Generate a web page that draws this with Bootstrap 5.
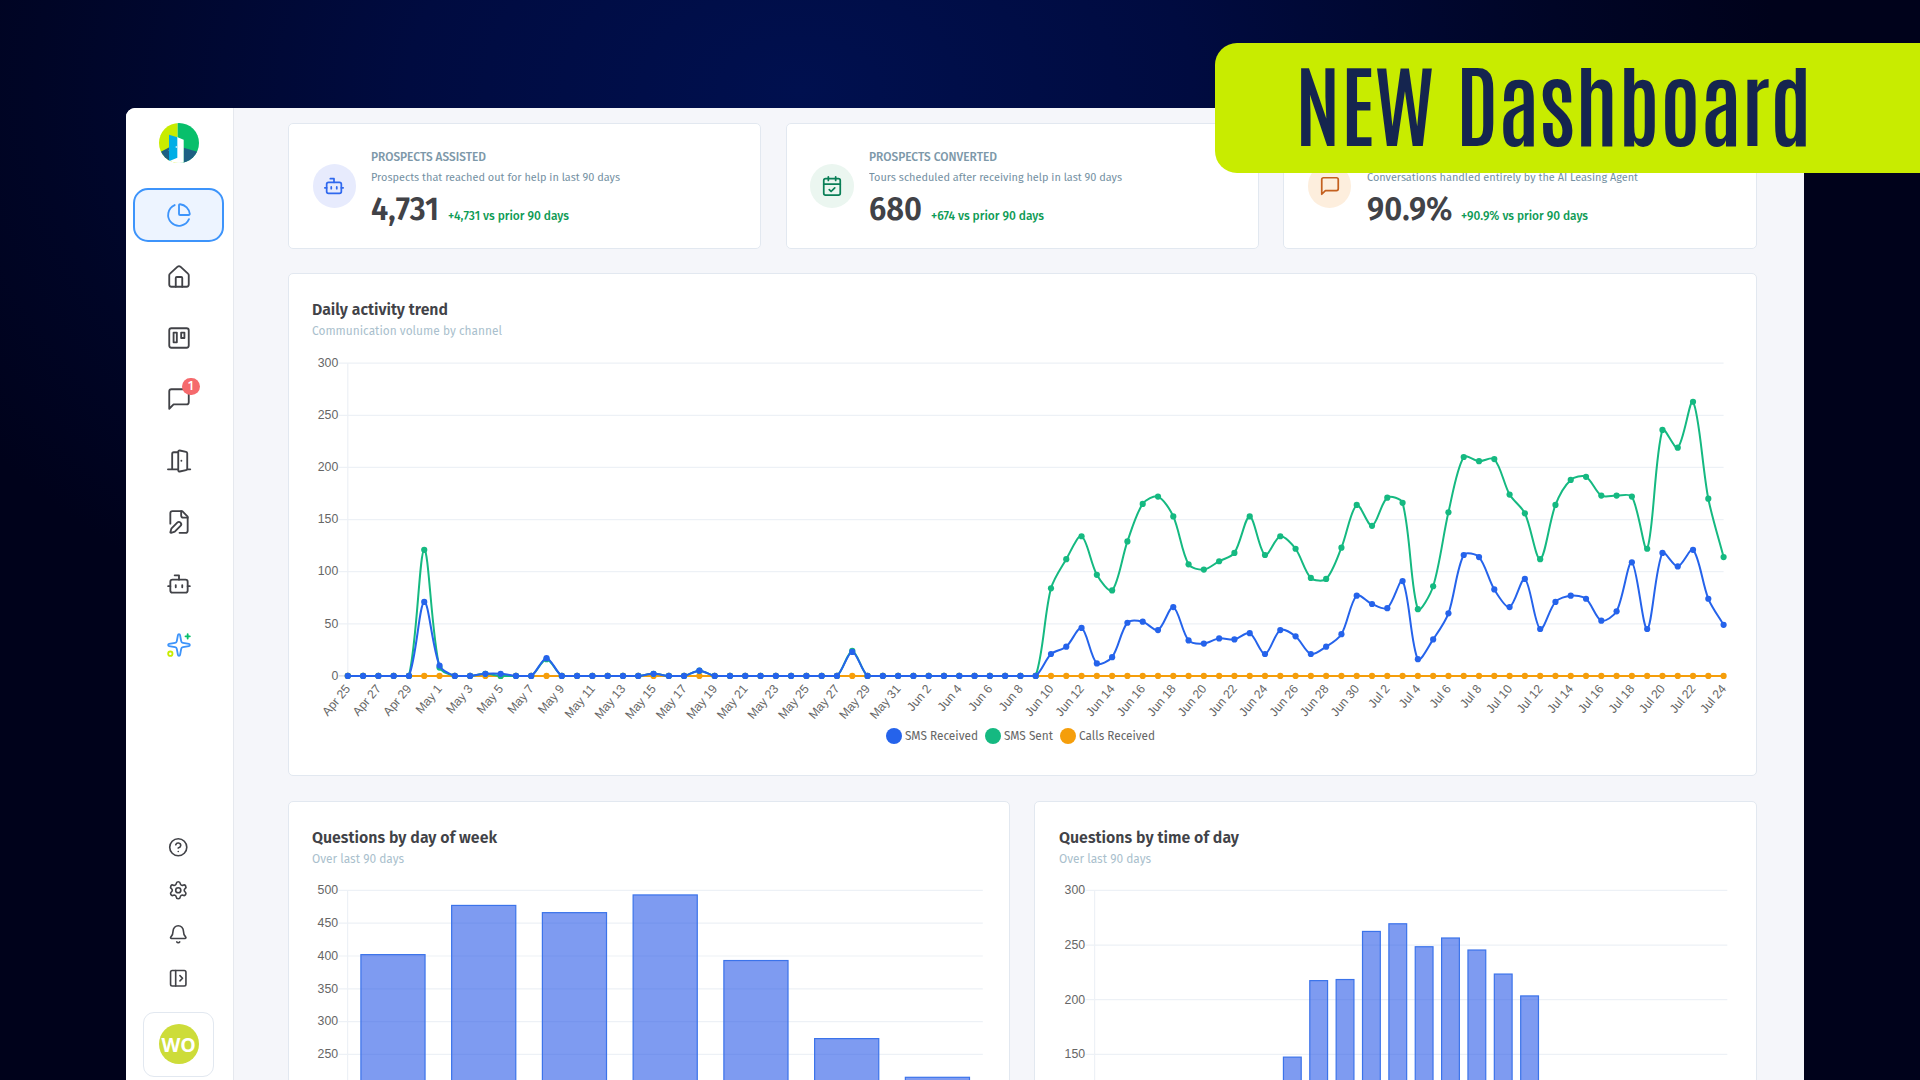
<!DOCTYPE html>
<html lang="en">
<head>
<meta charset="utf-8">
<title>Dashboard</title>
<link href="https://cdn.jsdelivr.net/npm/bootstrap@5.3.0/dist/css/bootstrap.min.css" rel="stylesheet">
<style>
  body { width: 1920px; height: 1080px; overflow: hidden; font-family: "Fira Sans", "Noto Sans", sans-serif; color: #414247;
    background: radial-gradient(ellipse 980px 640px at 800px 90px, #00104f 0%, #000b40 40%, #000526 78%, #00021b 100%); }
  .stage { padding: 108px 116px 0 126px; height: 1080px; }
  .app-panel { height: 972px; border-radius: 9px 9px 0 0; background: #f5f6fa; overflow: hidden; }
  .rail { width: 108px; background: #fff; border-right: 1px solid #e5e8ee; padding: 14.6px 2px 3.4px 0; flex: none; }
  .rail svg, .bubble svg { fill: none; stroke: currentColor; stroke-width: 1.7; stroke-linecap: round; stroke-linejoin: round; display: block; }
  .rail .brand { stroke: none; width: 40px; height: 40px; margin-bottom: 25.8px; }
  .rail-item { width: 90.5px; height: 53.3px; margin-bottom: 8.2px; border-radius: 15px; }
  .rail-item svg { width: 26px; height: 26px; }
  .rail-item.on { border: 2px solid #3d94fb; background: #edf4ff; color: #3d94fb; }
  .mini { height: 43.6px; }
  .mini svg { width: 20.5px; height: 20.5px; stroke-width: 1.9; }
  .count { left: 48.5px; top: 5.5px; width: 18px; height: 17px; background: #f56a6d; color: #fff; font-size: 12px; line-height: 17px; font-weight: 500; }
  .avatar-box { width: 71px; height: 64.5px; border: 1px solid #e2e8f0; border-radius: 11px; margin-top: 12.5px; }
  .avatar { width: 40px; height: 40px; background: #cddc39; color: #fff; font: 700 19.5px "Open Sans", sans-serif; letter-spacing: -.3px; }
  .main-area { padding: 15.2px 47.6px 0 54px; }
  .stack { gap: 24.3px; }
  .panel-card { background: #fff; border: 1px solid #e2e8f0; border-radius: 5px; flex: 1 1 0; min-width: 0; }
  .stat { height: 126px; padding: 23.6px 23.5px 0; gap: 15.2px; }
  .bubble { width: 43.6px; height: 43.6px; margin-top: 16.6px; flex: none; }
  .bubble svg { width: 22px; height: 22px; stroke-width: 1.9; }
  .b-blue { background: #e7ebfd; color: #2f68ee; }
  .b-green { background: #ebf6f0; color: #0a7f57; }
  .b-orange { background: #fdeedd; color: #c4601f; }
  .fit { display: inline-block; white-space: nowrap; transform-origin: 0 50%; }
  .s-head { font-size: 12.2px; line-height: 16px; height: 16px; font-weight: 500; color: #7d98a9; padding-top: 1px; }
  .s-sub { font-size: 11.4px; line-height: 16px; height: 16px; margin-top: 5px; color: #7490a2; }
  .s-num { line-height: 36px; height: 36px; margin-top: 6.4px; }
  .s-num .fig { font-size: 32px; font-weight: 600; }
  .s-num .delta { font-size: 12.2px; font-weight: 500; color: #0f9b56; margin-left: 9px; }
  .chart-card { padding: 24.8px 23.1px 0; }
  .c-title { font-size: 17.1px; font-weight: 600; line-height: 22px; height: 22px; }
  .c-sub { font-size: 12.2px; line-height: 18px; height: 18px; margin-top: 1px; color: #aabfcd; }
  .plot { display: block; margin-top: 10.2px; overflow: visible; }
  .plot text { font-family: "Liberation Sans", sans-serif; font-size: 12.3px; fill: #666; }
  .trend { height: 503px; flex: none; }
  .key { font-size: 12.2px; line-height: 16px; color: #666; gap: 7px; padding-right: 4.5px; margin-top: -22.5px; }
  .dot { width: 16px; height: 16px; margin-right: 3px; }
  .banner { right: 0; top: 43px; width: 705.3px; height: 130px; background: #c8ec00; border-radius: 22px 0 0 22px; padding-left: 80.5px;
    font: 600 90px/116px Antonio, Inter, sans-serif; color: #15254f; }
</style>
<script src="https://cdn.jsdelivr.net/npm/bootstrap@5.3.0/dist/js/bootstrap.bundle.min.js"></script>
</head>
<body>
<div class="stage">
  <div class="app-panel d-flex">
    <nav class="rail d-flex flex-column align-items-center">
      <svg class="brand" viewBox="147 68 120 120">
        <clipPath id="disc"><circle cx="207" cy="128" r="60"/></clipPath>
        <g clip-path="url(#disc)">
          <path fill="#c8ec00" d="M147 68h56v120h-56z"/><path fill="#08bf6b" d="M203 68h64v120h-64z"/>
          <path fill="#1e6083" d="M147 157l31-16v50h-31zM221 142l46 14v34h-46z"/>
          <path fill="#fff" d="M177 150l24-40 20 8v72h-44z"/>
          <path fill="#00aee6" d="M177 103l25 8v61l-25 11z"/><circle fill="#fff" cx="199" cy="140" r="2.5"/>
        </g>
      </svg>
      <div class="rail-item on d-flex align-items-center justify-content-center"><svg viewBox="0 0 24 24"><path d="M21 12c.552 0 1.005-.449.95-.998a10 10 0 0 0-8.953-8.951c-.55-.055-.998.398-.998.95v8a1 1 0 0 0 1 1z"/><path d="M21.21 15.89A10 10 0 1 1 8 2.83"/></svg></div>
      <div class="rail-item d-flex align-items-center justify-content-center"><svg viewBox="0 0 24 24"><path d="M15 21v-8a1 1 0 0 0-1-1h-4a1 1 0 0 0-1 1v8"/><path d="M3 10.4a2 2 0 0 1 .709-1.528l7-6.399a2 2 0 0 1 2.582 0l7 6.399A2 2 0 0 1 21 10.4V19a2 2 0 0 1-2 2H5a2 2 0 0 1-2-2z"/></svg></div>
      <div class="rail-item d-flex align-items-center justify-content-center"><svg viewBox="0 0 24 24"><rect x="3" y="3" width="18" height="18" rx="2"/><path d="M7 7h3v9H7zM14 7h3v5h-3z"/></svg></div>
      <div class="rail-item d-flex align-items-center justify-content-center position-relative"><svg viewBox="0 0 24 24"><path d="M21 15a2 2 0 0 1-2 2H7l-4 4V5a2 2 0 0 1 2-2h14a2 2 0 0 1 2 2z"/></svg><span class="count position-absolute rounded-pill text-center">1</span></div>
      <div class="rail-item d-flex align-items-center justify-content-center"><svg viewBox="0 0 24 24"><path d="M1.8 19.7h9.4M19.8 19.7h2.6M5.7 19.5V5.4A1.5 1.5 0 0 1 7.2 3.9h4"/><path d="M11.3 3.5a1.2 1.2 0 0 1 1.4-1.2l5.8 1.2a1.4 1.4 0 0 1 1.1 1.3v14.4a1.4 1.4 0 0 1-1.1 1.3l-5.8 1.2a1.2 1.2 0 0 1-1.4-1.2zM14.2 11.8h.01"/></svg></div>
      <div class="rail-item d-flex align-items-center justify-content-center"><svg viewBox="0 0 24 24"><path d="M12.5 22H18a2 2 0 0 0 2-2V7l-5-5H6a2 2 0 0 0-2 2v9.5"/><path d="M14 2v4a2 2 0 0 0 2 2h4"/><path d="M13.378 15.626a1 1 0 1 0-3.004-3.004l-5.01 5.012a2 2 0 0 0-.506.854l-.837 2.87a.5.5 0 0 0 .62.62l2.87-.837a2 2 0 0 0 .854-.506z"/></svg></div>
      <div class="rail-item d-flex align-items-center justify-content-center"><svg viewBox="0 0 24 24"><path d="M12 8V4H8"/><rect x="4" y="8" width="16" height="12" rx="2"/><path d="M2 14h2M20 14h2M15 13v2M9 13v2"/></svg></div>
      <div class="rail-item d-flex align-items-center justify-content-center"><svg viewBox="0 0 24 24"><path stroke="#3d94fb" d="M11.017 2.814a1 1 0 0 1 1.966 0l1.051 5.558a2 2 0 0 0 1.594 1.594l5.558 1.051a1 1 0 0 1 0 1.966l-5.558 1.051a2 2 0 0 0-1.594 1.594l-1.051 5.558a1 1 0 0 1-1.966 0l-1.051-5.558a2 2 0 0 0-1.594-1.594l-5.558-1.051a1 1 0 0 1 0-1.966l5.558-1.051a2 2 0 0 0 1.594-1.594z"/><path stroke="#08bf6b" d="M20 2v4M22 4h-4"/><circle stroke="#c8ec00" cx="4" cy="20" r="2"/></svg></div>
      <div class="mt-auto d-flex flex-column align-items-center">
        <div class="mini d-flex align-items-center justify-content-center"><svg viewBox="0 0 24 24"><circle cx="12" cy="12" r="10"/><path d="M9.09 9a3 3 0 0 1 5.83 1c0 2-3 3-3 3M12 17h.01"/></svg></div>
        <div class="mini d-flex align-items-center justify-content-center"><svg viewBox="0 0 24 24"><path d="M9.671 4.136a2.34 2.34 0 0 1 4.659 0 2.34 2.34 0 0 0 3.319 1.915 2.34 2.34 0 0 1 2.33 4.033 2.34 2.34 0 0 0 0 3.831 2.34 2.34 0 0 1-2.33 4.033 2.34 2.34 0 0 0-3.319 1.915 2.34 2.34 0 0 1-4.659 0 2.34 2.34 0 0 0-3.32-1.915 2.34 2.34 0 0 1-2.33-4.033 2.34 2.34 0 0 0 0-3.831A2.34 2.34 0 0 1 6.35 6.051a2.34 2.34 0 0 0 3.319-1.915"/><circle cx="12" cy="12" r="3"/></svg></div>
        <div class="mini d-flex align-items-center justify-content-center"><svg viewBox="0 0 24 24"><path d="M10.268 21a2 2 0 0 0 3.464 0M3.262 15.326A1 1 0 0 0 4 17h16a1 1 0 0 0 .74-1.673C19.41 13.956 18 12.499 18 8A6 6 0 0 0 6 8c0 4.499-1.411 5.956-2.738 7.326"/></svg></div>
        <div class="mini d-flex align-items-center justify-content-center"><svg viewBox="0 0 24 24"><rect x="3" y="3" width="18" height="18" rx="2"/><path d="M9 3v18M14 9l3 3-3 3"/></svg></div>
        <div class="avatar-box d-flex align-items-center justify-content-center"><div class="avatar rounded-circle d-flex align-items-center justify-content-center">WO</div></div>
      </div>
    </nav>

    <main class="main-area flex-grow-1">
      <div class="stack d-flex flex-column">
        <div class="stack d-flex">
          <section class="panel-card stat d-flex">
            <div class="bubble b-blue rounded-circle d-flex align-items-center justify-content-center"><svg viewBox="0 0 24 24"><path d="M12 8V4H8"/><rect x="4" y="8" width="16" height="12" rx="2"/><path d="M2 14h2M20 14h2M15 13v2M9 13v2"/></svg></div>
            <div>
              <div class="s-head"><span class="fit" data-w="115">PROSPECTS ASSISTED</span></div>
              <div class="s-sub"><span class="fit" data-w="249">Prospects that reached out for help in last 90 days</span></div>
              <div class="s-num d-flex align-items-baseline"><span class="fit fig" data-w="68">4,731</span><span class="fit delta" data-w="121">+4,731 vs prior 90 days</span></div>
            </div>
          </section>
          <section class="panel-card stat d-flex">
            <div class="bubble b-green rounded-circle d-flex align-items-center justify-content-center"><svg viewBox="0 0 24 24"><path d="M8 2v4M16 2v4M3 10h18M9 16l2 2 4-4"/><rect x="3" y="4" width="18" height="18" rx="2"/></svg></div>
            <div>
              <div class="s-head"><span class="fit" data-w="128">PROSPECTS CONVERTED</span></div>
              <div class="s-sub"><span class="fit" data-w="253">Tours scheduled after receiving help in last 90 days</span></div>
              <div class="s-num d-flex align-items-baseline"><span class="fit fig" data-w="53">680</span><span class="fit delta" data-w="113">+674 vs prior 90 days</span></div>
            </div>
          </section>
          <section class="panel-card stat d-flex">
            <div class="bubble b-orange rounded-circle d-flex align-items-center justify-content-center"><svg viewBox="0 0 24 24"><path d="M21 15a2 2 0 0 1-2 2H7l-4 4V5a2 2 0 0 1 2-2h14a2 2 0 0 1 2 2z"/></svg></div>
            <div>
              <div class="s-head"></div>
              <div class="s-sub"><span class="fit" data-w="271">Conversations handled entirely by the AI Leasing Agent</span></div>
              <div class="s-num d-flex align-items-baseline"><span class="fit fig" data-w="85.5">90.9%</span><span class="fit delta" data-w="127">+90.9% vs prior 90 days</span></div>
            </div>
          </section>
        </div>

        <section class="panel-card chart-card trend">
          <div class="c-title"><span class="fit" data-w="136">Daily activity trend</span></div>
          <div class="c-sub"><span class="fit" data-w="190">Communication volume by channel</span></div>
          <svg class="plot" id="trend" width="1420" height="400"></svg>
          <div class="key d-flex justify-content-center">
            <span class="d-flex align-items-center"><i class="dot rounded-circle" style="background:#2563eb"></i><span class="fit" data-w="73">SMS Received</span></span>
            <span class="d-flex align-items-center"><i class="dot rounded-circle" style="background:#15b981"></i><span class="fit" data-w="49">SMS Sent</span></span>
            <span class="d-flex align-items-center"><i class="dot rounded-circle" style="background:#f59e0b"></i><span class="fit" data-w="76">Calls Received</span></span>
          </div>
        </section>

        <div class="stack d-flex">
          <section class="panel-card chart-card">
            <div class="c-title"><span class="fit" data-w="185">Questions by day of week</span></div>
            <div class="c-sub"><span class="fit" data-w="92">Over last 90 days</span></div>
            <svg class="plot" id="week" width="674" height="230"></svg>
          </section>
          <section class="panel-card chart-card">
            <div class="c-title"><span class="fit" data-w="180">Questions by time of day</span></div>
            <div class="c-sub"><span class="fit" data-w="92">Over last 90 days</span></div>
            <svg class="plot" id="hours" width="674" height="230"></svg>
          </section>
        </div>
      </div>
    </main>
  </div>
</div>
<div class="banner position-absolute d-flex">
  <span class="fit" data-w="139">NEW</span>
  <span class="fit" data-w="356" style="margin-left:21.5px">Dashboard</span>
</div>
<script>
document.querySelectorAll('.fit').forEach(el => {
  const w = +el.dataset.w, n = el.getBoundingClientRect().width;
  el.style.flex = 'none';
  el.style.width = w + 'px';
  el.style.transform = `scaleX(${w / n})`;
});

const GRID = '#edf1f6';
const line = (x1, y1, x2, y2, c = GRID) => `<line x1="${x1}" y1="${y1}" x2="${x2}" y2="${y2}" stroke="${c}" stroke-width="1.2"/>`;

// Daily activity
const zeros = n => Array(n).fill(0);
const at = (n, o) => { const a = zeros(n); for (const k in o) a[k] = o[k]; return a; };
const received = at(46, {5: 71, 6: 10, 9: 2, 10: 2, 13: 17, 20: 2, 23: 5, 33: 23}).concat(
  [21,28,46,12,18,51,52,44,66,34,31,36,35,41,21,44,38,21,28,40,77,69,65,91,16,35,60,116,114,83,66,93,45,71,77,74,53,62,109,45,118,105,121,74,49]);
const sent = at(46, {5: 121, 6: 8, 9: 2, 13: 16, 20: 2, 23: 5, 33: 24}).concat(
  [84,112,134,97,82,129,165,172,153,107,102,110,118,153,116,134,122,94,93,123,164,144,171,166,64,86,157,210,206,208,174,156,112,164,188,191,173,173,172,122,236,219,263,170,114]);
const X0 = 35.8, X1 = 1411.6, YB = 325.9, YT = 13.2, STEP = (X1 - X0) / 90;
const py = v => YB - v * (YB - YT) / 300;
function spline(data, color) {
  const p = data.map((v, i) => [X0 + i * STEP, py(v)]);
  const clamp = y => Math.max(YT, Math.min(YB, y));
  const ctl = p.map((c, i) => {
    const a = p[i - 1] || c, b = p[i + 1] || c;
    const d0 = Math.hypot(c[0] - a[0], c[1] - a[1]), d1 = Math.hypot(b[0] - c[0], b[1] - c[1]);
    const f0 = 0.3 * d0 / (d0 + d1), f1 = 0.3 * d1 / (d0 + d1);
    return [c[0] - f0 * (b[0] - a[0]), clamp(c[1] - f0 * (b[1] - a[1])), c[0] + f1 * (b[0] - a[0]), clamp(c[1] + f1 * (b[1] - a[1]))];
  });
  let d = `M${p[0]}`;
  for (let i = 1; i < p.length; i++) d += `C${ctl[i-1][2]},${ctl[i-1][3]} ${ctl[i][0]},${ctl[i][1]} ${p[i]}`;
  return `<path d="${d}" fill="none" stroke="${color}" stroke-width="2"/>` +
    p.map(q => `<circle cx="${q[0]}" cy="${q[1]}" r="3.1" fill="${color}"/>`).join('');
}
let s = '';
for (let v = 0; v <= 300; v += 50) {
  s += line(X0 - 9, py(v), X1, py(v), v ? GRID : '#d5d8dc') + `<text x="${X0 - 9.5}" y="${py(v) + 3.8}" text-anchor="end">${v}</text>`;
}
s += line(X0, YT, X0, YB);
for (let i = 0; i < 91; i += 2) {
  const d = new Date(2025, 3, 25 + i);
  const t = ['Jan','Feb','Mar','Apr','May','Jun','Jul'][d.getMonth()] + ' ' + d.getDate();
  s += `<text transform="translate(${X0 + i * STEP + 3.2},${YB + 13}) rotate(-50)" text-anchor="end">${t}</text>`;
}
s += spline(zeros(91), '#f59e0b') + spline(sent, '#15b981') + spline(received, '#2563eb');
document.getElementById('trend').innerHTML = s;

// Bar charts, clipped by the bottom of the window
function bars(id, top, unit, data, x1) {
  const x0 = 35.6, y0 = 12.4, floor = 230, pitch = (x1 - x0) / data.length, w = pitch * 0.72;
  const y = v => y0 + (top - v) * unit;
  let s = '';
  for (let v = top; y(v) < floor; v -= 50) {
    s += line(x0 - 9, y(v), x1, y(v));
    if (y(v) < 200) s += `<text x="${x0 - 9.5}" y="${y(v) + 3.8}" text-anchor="end">${v}</text>`;
  }
  s += line(x0, y0, x0, floor);
  data.forEach((v, i) => {
    if (!v || y(v) > floor) return;
    s += `<rect x="${x0 + i * pitch + pitch * 0.14 + .6}" y="${y(v) + .6}" width="${w - 1.2}" height="${floor - y(v)}" fill="#2858e8" fill-opacity=".6" stroke="#3b73ea" stroke-width="1.2"/>`;
  });
  document.getElementById(id).innerHTML = s;
}
bars('week', 500, 0.656, [403, 478, 467, 494, 394, 275, 216], 670.8);
bars('hours', 300, 1.093, [0,0,0,0,0,0,0,148,218,219,263,270,249,257,246,224,204,0,0,0,0,0,0,0], 668.3);
</script>
</body>
</html>
